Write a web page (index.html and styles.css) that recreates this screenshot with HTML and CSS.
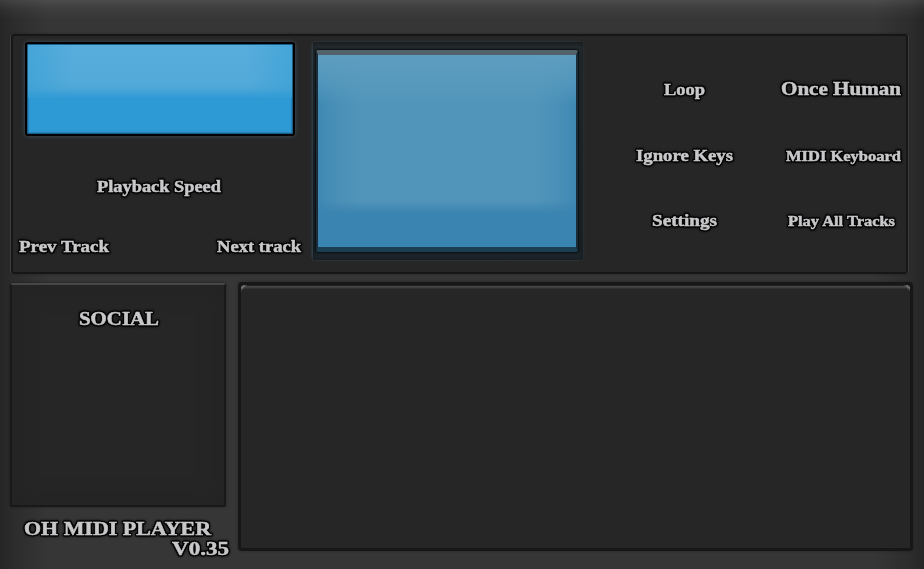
FILE: index.html
```html
<!DOCTYPE html>
<html lang="en">
<head>
<meta charset="utf-8">
<title>OH MIDI Player</title>
<link rel="stylesheet" href="styles.css">
</head>
<body>
<div class="player">
  <main class="deck">
    <section class="transport">
      <div class="lcd"><div class="gloss"></div></div>
      <svg class="label speed" width="126" height="24"><text x="1" y="18" textLength="124" lengthAdjust="spacingAndGlyphs">Playback Speed</text></svg>
      <div class="tracks">
        <svg class="label" width="90" height="24"><text x="0" y="18" textLength="90" lengthAdjust="spacingAndGlyphs">Prev Track</text></svg>
        <svg class="label" width="84" height="24"><text x="0" y="18" textLength="84" lengthAdjust="spacingAndGlyphs">Next track</text></svg>
      </div>
    </section>
    <section class="screen"><div class="glass"><div class="sheen"></div></div></section>
    <section class="options">
      <svg class="label" width="41" height="24"><text x="0" y="18" textLength="41" lengthAdjust="spacingAndGlyphs">Loop</text></svg>
      <svg class="label large" width="120" height="24"><text x="0" y="18" textLength="120" lengthAdjust="spacingAndGlyphs">Once Human</text></svg>
      <svg class="label" width="97" height="24"><text x="0" y="18" textLength="97" lengthAdjust="spacingAndGlyphs">Ignore Keys</text></svg>
      <svg class="label small end" width="116" height="24"><text x="0" y="18" textLength="115" lengthAdjust="spacingAndGlyphs">MIDI Keyboard</text></svg>
      <svg class="label" width="65" height="24"><text x="0" y="18" textLength="65" lengthAdjust="spacingAndGlyphs">Settings</text></svg>
      <svg class="label small" width="108" height="24"><text x="1" y="18" textLength="107" lengthAdjust="spacingAndGlyphs">Play All Tracks</text></svg>
    </section>
  </main>
  <div class="lower">
    <aside class="side">
      <section class="social">
        <svg class="label title" width="81" height="24"><text x="0" y="18" textLength="80" lengthAdjust="spacingAndGlyphs">SOCIAL</text></svg>
      </section>
      <footer class="brand">
        <svg class="label title" width="188" height="20"><text x="0" y="18" textLength="187" lengthAdjust="spacingAndGlyphs">OH MIDI PLAYER</text></svg>
        <svg class="label title version" width="57" height="20"><text x="0" y="18" textLength="57" lengthAdjust="spacingAndGlyphs">V0.35</text></svg>
      </footer>
    </aside>
    <section class="playlist"></section>
  </div>
</div>
</body>
</html>
```

FILE: styles.css
```css
* { box-sizing: border-box; }
body { margin: 0; background: #353535; }

.player {
  width: 924px;
  height: 569px;
  padding: 34px 11px 0 10px;
  overflow: hidden;
  background:
    linear-gradient(180deg, rgba(255,255,255,.11), rgba(255,255,255,.04) 9px, transparent 20px),
    linear-gradient(90deg, rgba(0,0,0,.3), rgba(0,0,0,.18) 14px, transparent 50px, transparent 874px, rgba(0,0,0,.18) 910px, rgba(0,0,0,.3)),
    #363636;
}

/* Heavy engraved lettering with a dark rim */
.label {
  display: block;
  overflow: visible;
  flex: none;
  filter:
    drop-shadow(1px 0 0 #050505) drop-shadow(-1px 0 0 #050505)
    drop-shadow(0 1px 0 #050505) drop-shadow(0 -1px 0 #050505)
    drop-shadow(0 0 1px #050505);
}
.label text {
  font: bold 17.5px "Liberation Serif", serif;
  fill: #c8c8ca;
  stroke: #c8c8ca;
  stroke-width: .5px;
}
.large text { font-size: 18.5px; }
.small text { font-size: 15px; }
.title text { font-size: 19px; }

.deck {
  display: flex;
  width: 897px;
  height: 240px;
  margin-left: 1px;
  border: 2px solid #161616;
  border-radius: 3px;
  background: #262626;
  box-shadow: -1px 0 0 -0.2px #474747, 1px 0 0 -0.2px #424242, 0 0 3px rgba(0,0,0,.35);
}
.transport { width: 300px; padding-top: 6px; }
.lcd {
  width: 270px;
  height: 94px;
  margin-left: 12px;
  border: 2px solid #000;
  border-radius: 3px;
  background: #2e9ad5;
  box-shadow: inset 0 0 2px 1px #124b6c, 0 0 4px rgba(85,110,125,.6);
  padding: 1px;
}
.gloss {
  height: 53px;
  background:
    linear-gradient(90deg, rgba(52,157,214,.5), transparent 45px, transparent 219px, rgba(52,157,214,.5)),
    linear-gradient(180deg, #57addb, #53aad9 36px, #4ca6d7 44px, #2e9ad5);
}
.speed { margin: 38px 0 0 83px; }
.tracks { display: flex; justify-content: space-between; margin-top: 36px; padding: 0 12px 0 6px; }

.screen {
  width: 270px;
  height: 218px;
  margin-top: 6px;
  padding: 8px 5px 8px 3px;
  border-radius: 3px;
  background: linear-gradient(180deg, #1d2021, #242b2e 6px, #1a2327 208px, #1c2429);
  box-shadow: inset 0 0 3px #11191d, 0 0 3px rgba(61,91,107,.4), -2px 0 3px -1px rgba(61,91,107,.5);
}
.glass {
  height: 202px;
  border: solid;
  border-width: 5px 2px 5px 2px;
  border-color: #53626b #192c37 #1b3e50 #192c37;
  border-radius: 2px;
  background: #3984b0;
  box-shadow: 0 0 2px 1px #080d10;
}
.sheen {
  height: 159px;
  background:
    linear-gradient(180deg, #5d9dc0, rgba(89,155,190,.7) 28px, transparent 50px, transparent 145px, #3984b0),
    linear-gradient(90deg, #3d89b4, #4a90b7 20px, #5295ba 44px, #5295ba 216px, #4a90b7 240px, #3d89b4);
}

.options {
  display: grid;
  grid-template-columns: 131px 122px;
  grid-template-rows: 66px 65px 30px;
  column-gap: 30px;
  padding: 41px 0 0 36px;
  justify-items: center;
}
.end { justify-self: end; }

.lower { display: flex; gap: 12px; margin-top: 8px; }
.side { width: 216px; padding-top: 1px; }
.social {
  height: 224px;
  padding: 22px 0 0 67px;
  border: 2px solid #191919;
  border-top: 2px solid #464646;
  border-radius: 2px;
  background: #262626;
  box-shadow: inset 0 0 24px #232323, 0 0 3px rgba(0,0,0,.4);
}
.brand { width: 219px; margin-top: 10px; padding-left: 14px; }
.version { margin-left: 148px; }
.playlist {
  width: 675px;
  height: 269px;
  border: 3px solid #171717;
  border-radius: 4px;
  background:
    linear-gradient(135deg, transparent 2px, #777 2px, transparent 5px),
    linear-gradient(225deg, transparent 2px, #777 2px, transparent 5px),
    linear-gradient(180deg, #222 1px, #484848 1px, #3c3c3c 3px, #262626 4px);
  background-repeat: no-repeat;
  box-shadow: 0 0 3px rgba(0,0,0,.3);
}
```
